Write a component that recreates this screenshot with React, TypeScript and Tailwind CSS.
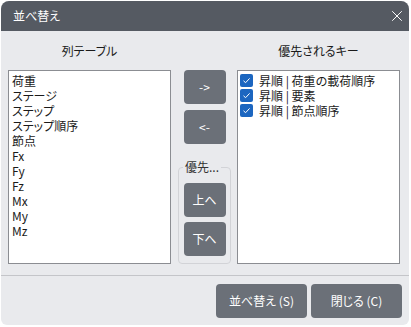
import { X } from "lucide-react";

const columns = ["荷重", "ステージ", "ステップ", "ステップ順序", "節点", "Fx", "Fy", "Fz", "Mx", "My", "Mz"];
const keys = ["昇順 | 荷重の載荷順序", "昇順 | 要素", "昇順 | 節点順序"];

function SmallButton({ children }: { children: React.ReactNode }) {
    return (
        <button className="w-[42px] h-[34px] rounded-[4px] bg-[#6b7078] text-white text-[12px] leading-none flex items-center justify-center">
            {children}
        </button>
    );
}

function FooterButton({ children }: { children: React.ReactNode }) {
    return (
        <button className="w-[91px] h-[34px] rounded-[4px] bg-[#6b7078] text-white text-[12px] leading-none flex items-center justify-center">
            {children}
        </button>
    );
}

export default function App() {
    return (
        <div className="w-[411px] h-[327px] bg-white pt-[1px] pl-[1px] font-['Noto_Sans_CJK_JP',sans-serif] [font-feature-settings:'palt'] text-[12px] text-[#1a1a1a]">
            <div className="w-[408px] h-[324px] rounded-t-[8px] rounded-b-[6px] overflow-hidden bg-[#e9eaed] flex flex-col">
                {/* Title bar */}
                <div className="h-[30px] bg-[#555a62] flex items-center justify-between pl-[12px] pr-[3px] text-white">
                    <span className="text-[12px] leading-none">並べ替え</span>
                    <X className="w-[18px] h-[18px]" strokeWidth={1.3} />
                </div>

                {/* Body */}
                <div className="flex pl-[7px]">
                    {/* Column table */}
                    <div className="w-[163px] flex flex-col">
                        <div className="h-[39px] pt-[12px] leading-[16px] text-center">列テーブル</div>
                        <div className="h-[194px] bg-white border border-[#8b8d92] px-[3px] pt-[2px]">
                            {columns.map((c) => (
                                <div key={c} className="leading-[15px] h-[15px]">{c}</div>
                            ))}
                        </div>
                    </div>

                    {/* Middle buttons */}
                    <div className="w-[53px] ml-[7px] pt-[39px] flex flex-col items-center">
                        <SmallButton>-&gt;</SmallButton>
                        <div className="mt-[6px]">
                            <SmallButton>&lt;-</SmallButton>
                        </div>
                        <fieldset className="mt-[17px] w-[53px] h-[103px] border border-[#d2d3d7] rounded-[4px] flex flex-col items-center pt-[10px] gap-[5px]">
                            <legend className="ml-[4px] px-[2px] leading-[12px] text-[#333]">優先...</legend>
                            <SmallButton>上へ</SmallButton>
                            <SmallButton>下へ</SmallButton>
                        </fieldset>
                    </div>

                    {/* Priority keys */}
                    <div className="w-[163px] ml-[6px] flex flex-col">
                        <div className="h-[39px] pt-[12px] leading-[16px] text-center">優先されるキー</div>
                        <div className="h-[194px] bg-white border border-[#8b8d92] px-[2px] pt-[2px]">
                            {keys.map((k) => (
                                <div key={k} className="h-[15px] flex items-center gap-[6px]">
                                    <div className="w-[13px] h-[13px] rounded-[2px] bg-[#1c66c0] flex items-center justify-center">
                                        <svg width="9" height="9" viewBox="0 0 9 9" fill="none">
                                            <path d="M1.5 4.8 L3.6 6.7 L7.6 2.4" stroke="white" strokeWidth="1" />
                                        </svg>
                                    </div>
                                    <span className="leading-[15px]">{k}</span>
                                </div>
                            ))}
                        </div>
                    </div>
                </div>

                {/* Footer */}
                <div className="mt-[11px] border-t border-[#c4c5c9]" />
                <div className="flex justify-end gap-[4px] pr-[7px] mt-[8px]">
                    <FooterButton>並べ替え (S)</FooterButton>
                    <FooterButton>閉じる (C)</FooterButton>
                </div>
            </div>
        </div>
    );
}
